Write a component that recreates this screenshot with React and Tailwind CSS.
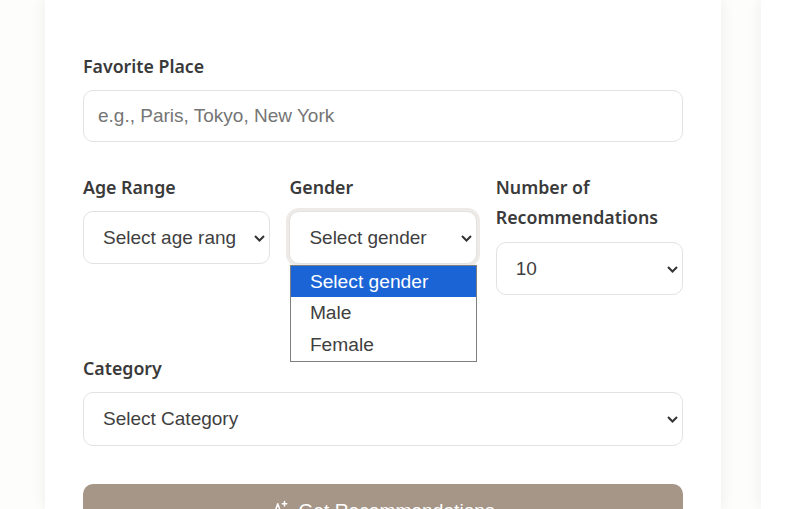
import React from "react";

const labelCls = "block text-[17.76px] leading-[30px] font-[575] text-[#3a3a3a] font-['Noto_Sans',sans-serif]";
const fieldCls =
  "w-full bg-white border border-[#e4e2df] rounded-[10px] text-[19px] text-[#3f3f3f] font-['Liberation_Sans',Arial,sans-serif] outline-none";

function Select({ value, options, className = "" }) {
  return (
    <div className="relative">
      <select
        defaultValue={value}
        className={`${fieldCls} appearance-none h-[53.4px] pl-[19px] pr-[33px] ${className}`}
      >
        {options.map((o) => (
          <option key={o}>{o}</option>
        ))}
      </select>
      <svg
        viewBox="0 0 11 7"
        width="11"
        height="7"
        fill="none"
        stroke="#333333"
        strokeWidth="2"
        className="absolute right-[5px] top-[24px] pointer-events-none"
      >
        <path d="M1 1l4.5 4.5L10 1" />
      </svg>
    </div>
  );
}

export default function App() {
  return (
    <div className="h-[509px] w-[806px] overflow-hidden bg-[#fdfdfb] flex pl-[45px] gap-[40px] font-['Liberation_Sans',Arial,sans-serif]">
      <div className="w-[676px] shrink-0 bg-white shadow-[0_0_15px_rgba(0,0,0,0.07)] px-[38px] pt-[51px]">
        <div>
          <label className={`${labelCls} mb-[9px]`}>Favorite Place</label>
          <input
            placeholder="e.g., Paris, Tokyo, New York"
            className={`${fieldCls} h-[52px] px-[14px] placeholder:text-[#757575]`}
          />
        </div>
        <div className="grid grid-cols-3 gap-x-[19.2px] mt-[30px]">
          <div>
            <label className={`${labelCls} mb-[9px]`}>Age Range</label>
            <Select value="Select age range" options={["Select age range"]} className="pt-[2px]" />
          </div>
          <div className="relative">
            <label className={`${labelCls} mb-[9px]`}>Gender</label>
            <Select
              value="Select gender"
              options={["Select gender", "Male", "Female"]}
              className="pt-[2px] shadow-[0_0_0_3px_rgba(166,150,136,0.2)]"
            />
            <ul className="absolute left-[1px] right-0 top-[93px] z-10 bg-white border border-[#7f7f7f] pb-[1px] text-[19.2px] leading-[31.3px] text-[#3f3f3f]">
              <li className="bg-[#1a64d6] text-white pl-[18.5px]">Select gender</li>
              <li className="pl-[18.5px]">Male</li>
              <li className="pl-[18.5px]">Female</li>
            </ul>
          </div>
          <div>
            <label className={`${labelCls} mb-[9.5px]`}>Number of Recommendations</label>
            <Select value="10" options={["5", "10", "15", "20"]} className="pt-[2px]" />
          </div>
        </div>
        <div className="mt-[58.5px]">
          <label className={`${labelCls} mb-[9px]`}>Category</label>
          <Select value="Select Category" options={["Select Category"]} />
        </div>
        <button className="mt-[38.4px] w-full h-[56px] rounded-[10px] bg-[#a69688] text-white text-[19.2px] flex items-start justify-center gap-[9px] pt-[13px]">
          <svg viewBox="0 0 24 24" width="18" height="18" fill="none" stroke="currentColor" strokeWidth="2" strokeLinecap="round" strokeLinejoin="round" className="mt-[3px]">
            <path d="M3 22 9 5l6 17" />
            <path d="M18 2v6M15 5h6" />
          </svg>
          <span>Get Recommendations</span>
        </button>
      </div>
      <div className="flex-1 bg-white shadow-[0_0_15px_rgba(0,0,0,0.07)]" />
    </div>
  );
}
